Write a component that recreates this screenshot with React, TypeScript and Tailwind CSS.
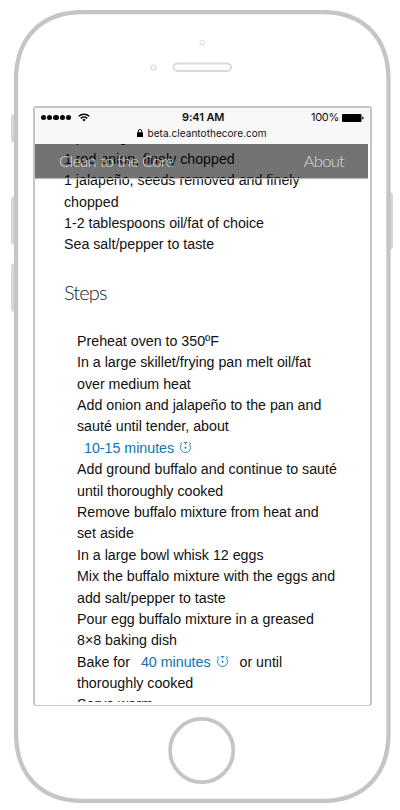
import React from "react";

const ingredients = [
  "1 pound ground buffalo",
  "1 red onion, finely chopped",
  "1 jalapeño, seeds removed and finely",
  "chopped",
  "1-2 tablespoons oil/fat of choice",
  "Sea salt/pepper to taste",
];

const steps: React.ReactNode[] = [
  "Preheat oven to 350ºF",
  "In a large skillet/frying pan melt oil/fat",
  "over medium heat",
  "Add onion and jalapeño to the pan and",
  "sauté until tender, about",
  <Timer label="10-15 minutes" />,
  "Add ground buffalo and continue to sauté",
  "until thoroughly cooked",
  "Remove buffalo mixture from heat and",
  "set aside",
  "In a large bowl whisk 12 eggs",
  "Mix the buffalo mixture with the eggs and",
  "add salt/pepper to taste",
  "Pour egg buffalo mixture in a greased",
  "8×8 baking dish",
  <span className="flex">
    Bake for
    <span className="ml-1">
      <Timer label="40 minutes" />
    </span>
    <span className="ml-[11px]">or until</span>
  </span>,
  "thoroughly cooked",
  "Serve warm",
];

function Timer({ label }: { label: string }) {
  return (
    <span className="ml-[7px] inline-flex text-[#0b74b5]">
      {label}
      <svg className="ml-[5px] mt-[3px] h-[13px] w-[13px]" viewBox="0 0 13 13" fill="none" stroke="#2f8cc6" strokeWidth="1">
        <path d="M2.8 3.2A5 5 0 1 0 10.2 3.2M6.5 1.5v2M4.7 1.5h3.6M1 3l1.8-1.6M12 3l-1.8-1.6" />
        <circle cx="6.5" cy="6.8" r="1" fill="#0b74b5" stroke="none" />
      </svg>
    </span>
  );
}

function StatusBar() {
  return (
    <div className="h-[36px] shrink-0 bg-[#f8f8f8] text-[#111]">
      <div className="flex h-[19px] items-center pl-[6px] pr-[6px] text-[11px]">
        <div className="flex w-[128px] items-center gap-[1px]">
          {[0, 1, 2, 3, 4].map((i) => (
            <span key={i} className="h-[5.2px] w-[5.2px] rounded-full bg-black" />
          ))}
          <svg className="ml-[6px] h-[9px] w-[12px]" viewBox="0 0 12 9" fill="none" stroke="black" strokeWidth="1.5">
            <path d="M.8 3.3a7.4 7.4 0 0 1 10.4 0M2.8 5.4a4.5 4.5 0 0 1 6.4 0" />
            <path d="M4.3 6.8a2.4 2.4 0 0 1 3.4 0L6 8.6z" fill="black" stroke="none" />
          </svg>
        </div>
        <span className="ml-[13px] whitespace-nowrap font-semibold tracking-[-0.1px]">9:41 AM</span>
        <span className="ml-auto tracking-[-0.3px]">100%</span>
        <svg className="ml-[3px] h-[8px] w-[22px]" viewBox="0 0 22 8">
          <rect width="19.5" height="8" rx="1" />
          <path d="M20.3 2.5c1.8.4 1.8 2.6 0 3z" />
        </svg>
      </div>
      <div className="flex h-[12px] items-center pl-[101.5px] text-[10px] tracking-[0.05px]">
        <svg className="mr-[5px] h-[8px] w-[6px]" viewBox="0 0 6 8">
          <rect y="3.3" width="6" height="4.7" rx=".6" />
          <path d="M1.3 4V2.2a1.7 1.7 0 0 1 3.4 0V4" fill="none" stroke="black" />
        </svg>
        beta.cleantothecore.com
      </div>
    </div>
  );
}

export default function App() {
  return (
    <div className="relative h-[810px] w-[400px] overflow-hidden bg-white font-['Inter',sans-serif]">
      <div className="absolute left-[11px] top-[114px] h-[29px] w-[4px] rounded-l-sm bg-[#d7d7d7]" />
      <div className="absolute left-[11px] top-[196px] h-[49px] w-[4px] rounded-l-sm bg-[#d7d7d7]" />
      <div className="absolute left-[11px] top-[263px] h-[49px] w-[4px] rounded-l-sm bg-[#d7d7d7]" />
      <div className="absolute left-[389px] top-[192px] h-[58px] w-[4px] rounded-r-sm bg-[#d7d7d7]" />
      <div className="pl-[14px] pt-[10px]">
        <div className="relative h-[793px] w-[377px] overflow-hidden">
          <svg className="absolute left-0 top-0 h-[793px] w-[377px]" viewBox="0 0 377 793" fill="none" stroke="#c5c5c5">
            <path d="M2 70C2 28 27 2 69 2H308C350 2 374.5 28 374.5 70V723C374.5 765 350 791 308 791H69C27 791 2 765 2 723Z" strokeWidth="4.3" />
            <g stroke="#dadada">
              <circle cx="188.3" cy="32.5" r="2.3" />
              <circle cx="139.4" cy="57.5" r="2.5" strokeWidth="1.2" />
              <rect x="159.5" y="53.5" width="57.5" height="7.5" rx="3.75" strokeWidth="1.8" />
            </g>
            <circle cx="187.7" cy="740.5" r="31.6" strokeWidth="3.8" />
          </svg>
          <div className="pl-[19px] pt-[96px]">
            <div className="flex h-[600px] w-[339px] flex-col rounded-[3px] border-2 border-b border-[#c5c5c5] bg-white">
              <StatusBar />
              <div className="relative h-[558px] w-[333px] overflow-hidden">
                <div className="-mt-[16.6px] whitespace-nowrap pl-[29px] font-['Liberation_Sans',Arial,sans-serif] text-[14.22px] leading-[21.4px] text-[#111]">
                  {ingredients.map((line) => (
                    <p key={line}>{line}</p>
                  ))}
                  <h2 className="mb-[27px] mt-[24px] h-[24px] font-['Lato',sans-serif] text-[20px] font-light leading-[24px] tracking-[-0.9px] text-[#222]">
                    Steps
                  </h2>
                  <div className="pl-[13px]">
                    {steps.map((line, i) => (
                      <div key={i} className="h-[21.4px]">{line}</div>
                    ))}
                  </div>
                </div>
                <div className="absolute inset-x-0 top-0 flex h-[34px] items-center justify-between bg-black/55 pl-[24px] pr-[24px] font-['Lato',sans-serif] text-[16.5px] font-light tracking-[-0.7px] text-[#ddd] shadow-[0_1px_1px_#bbb]">
                  <span>Clean to the Core</span>
                  <span>About</span>
                </div>
              </div>
            </div>
          </div>
        </div>
      </div>
    </div>
  );
}
